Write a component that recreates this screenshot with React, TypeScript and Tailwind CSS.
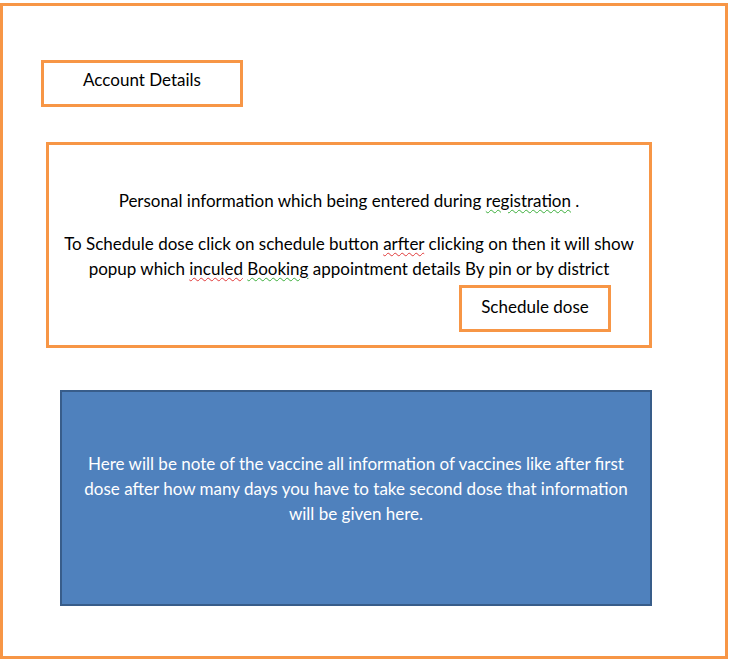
export default function App() {
  return (
    <div className="min-h-screen bg-white pt-[3px] font-['Lato','Liberation_Sans',sans-serif] text-[17px] text-black">
      <div className="w-[728px] h-[656px] border-[3px] border-[#f79646] flex flex-col items-start">
        {/* account details tab */}
        <div className="ml-[38px] mt-[54px] w-[202px] h-[47px] border-[3px] border-[#f79646] flex justify-center pt-[4px] leading-[25px]">
          Account Details
        </div>

        {/* personal info card */}
        <div className="ml-[43px] mt-[35px] w-[606px] h-[206px] border-[3px] border-[#f79646] flex flex-col items-center pt-[43px] leading-[25px]">
          <p className="whitespace-nowrap">
            Personal information which being entered during{' '}
            <span className="underline decoration-wavy decoration-[#3cae3c] decoration-1 underline-offset-2">registration</span> .
          </p>
          <p className="mt-[18px] text-center whitespace-nowrap">
            To Schedule dose click on schedule button{' '}
            <span className="underline decoration-wavy decoration-[#e03a3a] decoration-1 underline-offset-2">arfter</span> clicking on then it will show
            <br />
            popup which{' '}
            <span className="underline decoration-wavy decoration-[#e03a3a] decoration-1 underline-offset-2">inculed</span>{' '}
            <span className="underline decoration-wavy decoration-[#3cae3c] decoration-1 underline-offset-2">Booking</span> appointment details By pin or by district
          </p>
          <div className="self-end mr-[38px] mt-[4px] w-[152px] h-[47px] border-[3px] border-[#f79646] flex justify-center pt-[6px] leading-[25px]">
            Schedule dose
          </div>
        </div>

        {/* vaccine note */}
        <div className="ml-[57px] mt-[42px] w-[592px] h-[216px] bg-[#4f81bd] border-2 border-[#385d8a] flex items-center justify-center">
          <p className="text-center text-white leading-[25px] whitespace-nowrap pb-[20px]">
            Here will be note of the vaccine all information of vaccines like after first
            <br />
            dose after how many days you have to take second dose that information
            <br />
            will be given here.
          </p>
        </div>
      </div>
    </div>
  );
}
